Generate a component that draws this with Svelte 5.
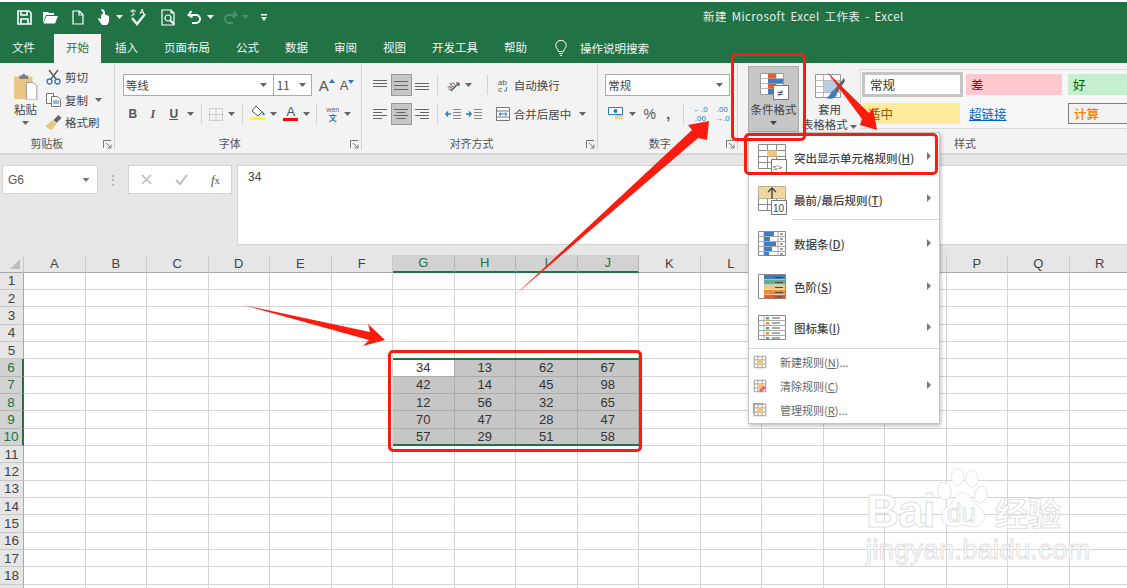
<script>
  const tabs = ['插入', '页面布局', '公式', '数据', '审阅', '视图', '开发工具', '帮助'];
  const columns = 'ABCDEFGHIJKLMNOPQR'.split('');
  const rows = Array.from({ length: 19 }, (_, i) => i + 1);
  const values = {
    6: [34, 13, 62, 67],
    7: [42, 14, 45, 98],
    8: [12, 56, 32, 65],
    9: [70, 47, 28, 47],
    10: [57, 29, 51, 58]
  };
  const selectedCols = ['G', 'H', 'I', 'J'];

  function cellValue(row, col) {
    const idx = selectedCols.indexOf(col);
    if (idx < 0 || !values[row]) return '';
    return values[row][idx];
  }

  function isSelected(row, col) {
    return selectedCols.includes(col) && row >= 6 && row <= 10;
  }
</script>

{#snippet caret(color = '#666')}
  <svg class="caret" width="7" height="4" viewBox="0 0 7 4"><path d="M0 0h7L3.5 4z" fill={color} /></svg>
{/snippet}

{#snippet launcher()}
  <svg class="launcher" width="9" height="9" viewBox="0 0 9 9" fill="none" stroke="#777"><path d="M.5 8V.5H8M3 3l5 5M8 4.5V8H4.5" /></svg>
{/snippet}

{#snippet tableGrid()}
  <path d="M1.5 1.5h27v24h-27zM1.5 7.5h27M1.5 13.5h27M1.5 19.5h27M10.5 1.5v24M19.5 1.5v24" fill="#fff" stroke="#8a8a8a" />
{/snippet}

{#snippet smallTable()}
  <path d="M1.5 1.5h14v14h-14zM1.5 6h14M1.5 11h14M6 1.5v14M11 1.5v14" fill="#fff" stroke="#8a8a8a" />
  <rect x="5" y="5.500" width="7" height="6" fill="#f0c77f" />
{/snippet}

<div class="app">
  <header class="titlebar">
    <div class="qat">
      <span class="q q24">
        <svg width="15" height="15" viewBox="0 0 15 15" fill="none" stroke="#fff" stroke-width="1.6"><path d="M1 1h11l2 2v11H1z" /><path d="M4 1v4h6V1M4 14V9h7v5" /></svg>
      </span>
      <span class="q q28">
        <svg width="16" height="13" viewBox="0 0 16 13" fill="#fff"><path d="M1 3V1h5l1 1h5v2H4L1 12zM4.500 5H16l-3 7.500H1.500z" /></svg>
      </span>
      <span class="q q28">
        <svg width="12" height="15" viewBox="0 0 12 15" fill="none" stroke="#fff" stroke-width="1.2"><path d="M1 1h6.500L11 4.500V14H1zM7 1v4h4" /></svg>
      </span>
      <span class="q q22">
        <svg width="14" height="18" viewBox="0 0 14 18" fill="#fff"><path d="M5 1a4 4 0 0 1 4 4v1.500l4 1.500v6l-2 3H6L2 11l1-1 2 1V5h1.500v0z" /><circle cx="5.500" cy="5" r="1.600" fill="#217346" /></svg>
      </span>
      <span class="q q10">{@render caret('#fff')}</span>
      <span class="q q28">
        <svg width="18" height="18" viewBox="0 0 18 18" fill="none" stroke="#e8f1ec" stroke-width="1.500"><path d="M1 3h6M4 1v5M2 8l4-2M11 6l2-5 2 5M12 4.500h3" stroke-width="1" /><path d="M3 10l5 6 8-10" stroke-width="2.400" /></svg>
      </span>
      <span class="q q32">
        <svg width="15" height="17" viewBox="0 0 15 17" fill="none" stroke="#fff" stroke-width="1.200"><path d="M10 1H1v15h12V4zM10 1v3h3" /><circle cx="7" cy="9" r="3" /><path d="M9 11l4 4" stroke-width="1.800" /></svg>
      </span>
      <span class="q q21">
        <svg width="15" height="14" viewBox="0 0 15 14" fill="none" stroke="#fff" stroke-width="2"><path d="M4.500 1L1.500 5l4 2.500M2 5h7a4 4 0 0 1 0 8H5" /></svg>
      </span>
      <span class="q q10">{@render caret('#fff')}</span>
      <span class="q q24 redo">
        <svg width="15" height="14" viewBox="0 0 15 14" fill="none" stroke="#4c9070" stroke-width="2"><path d="M10.500 1l3 4-4 2.500M13 5H6a4 4 0 0 0 0 8h4" /></svg>
      </span>
      <span class="q q10 dim">{@render caret('#4c9070')}</span>
      <span class="q q28">
        <svg width="6" height="7" viewBox="0 0 6 7" fill="#fff"><path d="M0 0h6v1.500H0zM0 3h6L3 7z" /></svg>
      </span>
    </div>
    <div class="doc-title">新建 Microsoft Excel 工作表 - Excel</div>
  </header>

  <nav class="tabs">
    <span class="tab">文件</span>
    <span class="tab active">开始</span>
    {#each tabs as tab}
      <span class="tab">{tab}</span>
    {/each}
    <span class="search">
      <svg width="12" height="16" viewBox="0 0 12 16" fill="none" stroke="#fff"><path d="M3.500 11.500C3 9 .8 8 .8 5.500a5.200 5.200 0 0 1 10.400 0C11.200 8 9 9 8.500 11.500zM4 13.500h4M5 15.500h2" /></svg>
      操作说明搜索
    </span>
  </nav>

  <section class="ribbon">
    <div class="group clip">
      <div class="body clip-body">
        <div class="paste">
          <svg width="27" height="27" viewBox="0 0 28 31">
            <path d="M1 4h21v26H1z" fill="#e9c684" />
            <path d="M7 3h3a2 2 0 0 1 4 0h3v4H7z" fill="#7f7f7f" />
            <path d="M15 11h8l4 4v16H15z" fill="#fff" stroke="#8c8c8c" />
          </svg>
          <span>粘贴</span>
          {@render caret()}
        </div>
        <ul class="clip-list">
          <li>
            <svg width="15" height="16" viewBox="0 0 15 16" fill="none"><path d="M3 1l7 9M12 1l-7 9" stroke="#555" stroke-width="1.400" /><circle cx="3.500" cy="12.500" r="2.500" stroke="#2b79c2" stroke-width="1.300" /><circle cx="11.500" cy="12.500" r="2.500" stroke="#2b79c2" stroke-width="1.300" /></svg>
            <span>剪切</span>
          </li>
          <li>
            <svg width="15" height="14" viewBox="0 0 15 14" fill="#fff" stroke="#777"><path d="M.5.5h7v10h-7z" /><path d="M5.500 3.500h6l3 3v7h-9z" /><path d="M7 8h6M7 10h6" stroke="#2b79c2" /></svg>
            <span>复制</span>
            {@render caret()}
          </li>
          <li>
            <svg width="16" height="15" viewBox="0 0 16 15"><path d="M0 11l7-6 4 4-5 6c-2-1-4-2-6-4z" fill="#e9c684" /><path d="M8 5l5-5 3 3-5 5z" fill="#666" /></svg>
            <span>格式刷</span>
          </li>
        </ul>
      </div>
      <div class="label clip-label">剪贴板{@render launcher()}</div>
    </div>

    <div class="group font">
      <div class="body font-body">
        <div class="font-row1">
          <div class="combo">
            <span class="combo-name">等线{@render caret()}</span>
            <span class="combo-size">11{@render caret()}</span>
          </div>
          <span class="grow">A<svg width="6" height="4" viewBox="0 0 6 4"><path d="M0 4l3-4 3 4z" fill="#2b79c2" /></svg></span>
          <span class="shrink">A<svg width="6" height="4" viewBox="0 0 6 4"><path d="M0 0l3 4 3-4z" fill="#2b79c2" /></svg></span>
        </div>
        <div class="tool-row">
          <span class="w20 bold">B</span>
          <span class="w20 ital">I</span>
          <span class="w22 under">U</span>
          <span class="w12">{@render caret()}</span>
          <span class="w10"><i class="vsep"></i></span>
          <span class="w19">
            <svg width="14" height="13" viewBox="0 0 14 13" fill="none" stroke="#aaa" stroke-dasharray="1 1"><path d="M.5.500h13v12H.5zM7 .5v12M.5 6.500h13" /></svg>
          </span>
          <span class="w12">{@render caret()}</span>
          <span class="w10"><i class="vsep"></i></span>
          <span class="w20 stack">
            <svg width="16" height="11" viewBox="0 0 16 11"><path d="M6 0l6 6-4 4-6-5z" fill="#fff" stroke="#555" /><path d="M13 5l2 4h-3z" fill="#2b79c2" /></svg>
            <b class="swatch yellow"></b>
          </span>
          <span class="w12">{@render caret()}</span>
          <span class="w22 stack font-a">A<b class="swatch red"></b></span>
          <span class="w10">{@render caret()}</span>
          <span class="w10"><i class="vsep"></i></span>
          <span class="w22 wen"><small>wén</small><em>文</em></span>
          <span class="w8">{@render caret()}</span>
        </div>
      </div>
      <div class="label">字体{@render launcher()}</div>
    </div>

    <div class="group align">
      <div class="body align-body">
        <div class="tool-row">
          <span class="w21">
            <svg width="14" height="10" viewBox="0 0 14 10" stroke="#666"><path d="M0 .5h14M0 3.500h14M0 6.500h14" /></svg>
          </span>
          <span class="w21 pressed">
            <svg width="14" height="9" viewBox="0 0 14 9" stroke="#666"><path d="M0 .5h14M0 4.500h14M0 8.500h14" /></svg>
          </span>
          <span class="w21">
            <svg width="14" height="10" viewBox="0 0 14 10" stroke="#666"><path d="M0 3.500h14M0 6.500h14M0 9.500h14" /></svg>
          </span>
          <span class="w10"><i class="vsep"></i></span>
          <span class="w21">
            <svg width="16" height="15" viewBox="0 0 16 15" fill="none" stroke="#555"><text x="1" y="12" class="abc tilt">ab</text><path d="M6 13l8-8M14 5h-3M14 5v3" stroke-width="1.200" /></svg>
          </span>
          <span class="w9">{@render caret()}</span>
          <span class="w12 wrap-sep"><i class="vsep"></i></span>
          <span class="w18">
            <svg width="12" height="15" viewBox="0 0 12 15"><text x="1" y="7" class="abc">ab</text><text x="1" y="14" class="abc">c</text><path d="M10 9l-1 4H7" fill="none" stroke="#2b79c2" /></svg>
          </span>
          <span class="cmd">自动换行</span>
        </div>
        <div class="tool-row">
          <span class="w21">
            <svg width="14" height="10" viewBox="0 0 14 10" stroke="#666"><path d="M0 .5h14M0 3.500h9M0 6.500h14M0 9.500h9" /></svg>
          </span>
          <span class="w21 pressed">
            <svg width="14" height="10" viewBox="0 0 14 10" stroke="#666"><path d="M0 .5h14M2.500 3.500h9M0 6.500h14M2.500 9.500h9" /></svg>
          </span>
          <span class="w21">
            <svg width="14" height="10" viewBox="0 0 14 10" stroke="#666"><path d="M0 .5h14M5 3.500h9M0 6.500h14M5 9.500h9" /></svg>
          </span>
          <span class="w10"><i class="vsep"></i></span>
          <span class="w21">
            <svg width="16" height="11" viewBox="0 0 16 11" fill="none"><path d="M8 .5h8M8 3.500h8M8 6.500h8M8 9.500h8" stroke="#888" /><path d="M6 5H1M3 2.500L.8 5 3 7.500" stroke="#2b79c2" stroke-width="1.300" /></svg>
          </span>
          <span class="w21">
            <svg width="16" height="11" viewBox="0 0 16 11" fill="none"><path d="M8 .5h8M8 3.500h8M8 6.500h8M8 9.500h8" stroke="#888" /><path d="M0 5h5M3 2.500L5.200 5 3 7.500" stroke="#2b79c2" stroke-width="1.300" /></svg>
          </span>
          <span class="w9"></span>
          <span class="w18">
            <svg width="14" height="14" viewBox="0 0 14 14" fill="#fff" stroke="#777"><path d="M.5.5h13v13H.5zM.5 4h13M.5 10h13" /><path d="M3 7h8M5 5.500L3 7l2 1.500M9 5.500L11 7 9 8.500" fill="none" stroke="#2b79c2" /></svg>
          </span>
          <span class="cmd">合并后居中</span>
          <span class="merge-caret">{@render caret()}</span>
        </div>
      </div>
      <div class="label">对齐方式{@render launcher()}</div>
    </div>

    <div class="group number">
      <div class="body number-body">
        <div class="num-combo">常规{@render caret()}</div>
        <div class="tool-row">
          <span class="w22">
            <svg width="16" height="14" viewBox="0 0 16 14"><path d="M.5.5h14v7H.5z" fill="#fff" stroke="#2b79c2" /><circle cx="7.500" cy="4" r="2" fill="#2b79c2" /><path d="M7 8h8v1.800H7zM7 10.500h8v1.500H7z" fill="#e9c684" /></svg>
          </span>
          <span class="w10">{@render caret()}</span>
          <span class="w22 pct">%</span>
          <span class="w18 comma">,</span>
          <span class="w12"><i class="vsep"></i></span>
          <span class="w22 dec"><b>←.0</b><b>.00</b></span>
          <span class="w22 dec"><b>.00</b><b>→.0</b></span>
        </div>
      </div>
      <div class="label">数字{@render launcher()}</div>
    </div>

    <div class="group styles">
      <div class="body styles-body">
        <div class="big-btn pressed-btn">
          <svg width="30" height="28" viewBox="0 0 30 28">
            <path d="M1.500 1.500h23v21h-23z" fill="#fff" stroke="#999" />
            <path d="M1.500 6.500h23M1.500 11.500h23M1.500 16.500h23M9.500 1.500v21M17 1.500v21" stroke="#bbb" />
            <rect x="9" y="1.500" width="8" height="5" fill="#d9623c" />
            <rect x="9" y="7" width="15" height="4.500" fill="#3f7dc1" />
            <rect x="9" y="12" width="8" height="4.500" fill="#d9623c" />
            <rect x="9" y="17" width="5" height="5" fill="#3f7dc1" />
            <path d="M14.500 13.500h15v14h-15z" fill="#fff" stroke="#777" />
            <text x="18" y="25" class="ne">≠</text>
          </svg>
          <span>条件格式</span>
          {@render caret('#444')}
        </div>
        <div class="big-btn table-btn">
          <svg width="31" height="28" viewBox="0 0 31 28">
            <path d="M1.500 1.500h25v23h-25z" fill="#fff" stroke="#999" />
            <path d="M1.500 7.500h25M1.500 13.500h25M1.500 19.500h25M9.500 1.500v23M17.500 1.500v23" stroke="#bbb" />
            <rect x="10" y="8" width="16" height="11" fill="#b9cde5" />
            <path d="M30 5L20 17l3 3L31 8z" fill="#666" />
            <path d="M20 17c-4 1-3 6-8 8 5 2 11 0 11-5z" fill="#3f7dc1" />
          </svg>
          <span>套用</span>
          <span class="two">表格格式 {@render caret()}</span>
        </div>
        <div class="gallery">
          <div class="cell normal">常规</div>
          <div class="cell bad">差</div>
          <div class="cell good">好</div>
          <div class="cell neutral">适中</div>
          <div class="cell link">超链接</div>
          <div class="cell calc">计算</div>
        </div>
      </div>
      <div class="label styles-label">样式</div>
    </div>
  </section>

  <section class="formula">
    <div class="namebox"><span>G6</span>{@render caret('#777')}</div>
    <div class="dots">⋮</div>
    <div class="fx-box">
      <svg width="11" height="11" viewBox="0 0 11 11" stroke="#bdbdbd" stroke-width="1.600"><path d="M1 1l9 9M10 1l-9 9" /></svg>
      <svg width="13" height="11" viewBox="0 0 13 11" fill="none" stroke="#bdbdbd" stroke-width="2"><path d="M1 6l4 4 7-9" /></svg>
      <span class="fx"><i>f</i><small>x</small></span>
    </div>
    <div class="input">34</div>
  </section>

  <section class="sheet">
    <div class="corner"><i></i></div>
    {#each columns as col}
      <div class="col-head" class:sel={selectedCols.includes(col)}>{col}</div>
    {/each}
    {#each rows as row}
      <div class="row-head" class:sel={row >= 6 && row <= 10}>{row < 19 ? row : ''}</div>
      {#each columns as col}
        <div class="cell-box" class:sel={isSelected(row, col)} class:anchor={row === 6 && col === 'G'}>{cellValue(row, col)}</div>
      {/each}
    {/each}
    <div class="selection"></div>
  </section>

  <div class="watermark" aria-hidden="true">
    <div class="wm-top">
      <span class="wm-bai">Bai</span>
      <span class="wm-paw">
        <svg width="60" height="64" viewBox="0 0 62 72" fill="#fff" stroke="#e2e2e2">
          <ellipse cx="10" cy="26" rx="7.500" ry="10" transform="rotate(-15 10 26)" />
          <ellipse cx="25" cy="10" rx="7" ry="9.500" />
          <ellipse cx="41" cy="12" rx="7" ry="9.500" />
          <ellipse cx="51" cy="30" rx="7" ry="9.500" transform="rotate(15 51 30)" />
          <path d="M30 28c-8 0-10 12-18 17-8 6-5 21 8 21 5 0 7-2 11-2s7 2 12 2c13 0 16-15 7-21-8-5-11-17-20-17z" />
        </svg>
        <b>du</b>
      </span>
      <span class="wm-jy">经验</span>
    </div>
    <div class="wm-url">jingyan.baidu.com</div>
  </div>

  <aside class="menu">
    <div class="mi large">
      <svg width="30" height="30" viewBox="0 0 30 30">
        {@render tableGrid()}
        <rect x="10" y="7.500" width="10" height="6" fill="#f0c77f" />
        <path d="M14.500 16.500h15v13h-15z" fill="#fff" stroke="#777" />
        <text x="16" y="27" class="mini">≤&gt;</text>
      </svg>
      <span class="mt">突出显示单元格规则(<u>H</u>)</span>
      <i class="arrow"></i>
    </div>
    <div class="mi large line">
      <svg width="30" height="30" viewBox="0 0 30 30">
        {@render tableGrid()}
        <rect x="1.500" y="1.500" width="27" height="12" fill="#f0d79f" />
        <path d="M15 14V3M11 7l4-4 4 4" fill="none" stroke="#444" stroke-width="1.400" />
        <path d="M14.500 15.500h15v14h-15z" fill="#fff" stroke="#777" />
        <text x="16" y="27" class="mini ten">10</text>
      </svg>
      <span class="mt">最前/最后规则(<u>T</u>)</span>
      <i class="arrow"></i>
    </div>
    <div class="mi large">
      <svg width="30" height="28" viewBox="0 0 30 28">
        <path d="M1.500 1.500h27v24h-27z" fill="#fff" stroke="#8a8a8a" />
        <path d="M1.500 6.500h27M1.500 11.500h27M1.500 16.500h27M1.500 21.500h27M7 1.500v24M21 1.500v24" stroke="#aaa" />
        <path d="M7 2h10v4H7zM7 7h6v4H7zM7 12h12v4H7zM7 17h8v4H7zM7 22h5v3.500H7z" fill="#3f7dc1" />
        <path d="M23 4h3M23 9h3M23 14h3M23 19h3M23 24h3" stroke="#444" />
      </svg>
      <span class="mt">数据条(<u>D</u>)</span>
      <i class="arrow"></i>
    </div>
    <div class="mi large">
      <svg width="30" height="28" viewBox="0 0 30 28">
        <path d="M1.500 1.500h27v24h-27z" fill="#fff" stroke="#8a8a8a" />
        <rect x="7" y="2" width="21" height="4.500" fill="#3f7dc1" />
        <rect x="7" y="7" width="21" height="4.500" fill="#6fa987" />
        <rect x="7" y="12" width="21" height="4.500" fill="#f0c77f" />
        <rect x="7" y="17" width="21" height="4.500" fill="#ed8a35" />
        <rect x="7" y="22" width="21" height="3.500" fill="#d9623c" />
        <path d="M18 4.500h8M18 9.500h8M18 14.500h8M18 19.500h8M18 24h8" stroke="#444" />
      </svg>
      <span class="mt">色阶(<u>S</u>)</span>
      <i class="arrow"></i>
    </div>
    <div class="mi large">
      <svg width="30" height="28" viewBox="0 0 30 28">
        <path d="M1.500 1.500h27v24h-27z" fill="#fff" stroke="#8a8a8a" />
        <path d="M1.500 6.500h27M1.500 11.500h27M1.500 16.500h27M1.500 21.500h27M7 1.500v24" stroke="#aaa" />
        <rect x="9" y="3" width="3" height="2.500" fill="#5aa37c" />
        <rect x="9" y="8" width="3" height="2.500" fill="#ed8a35" />
        <rect x="9" y="13" width="3" height="2.500" fill="#5aa37c" />
        <rect x="9" y="18" width="3" height="2.500" fill="#ed8a35" />
        <rect x="9" y="23" width="3" height="2" fill="#5aa37c" />
        <path d="M15 4h8M15 9h8M15 14h8M15 19h8M15 24h8" stroke="#555" />
      </svg>
      <span class="mt">图标集(<u>I</u>)</span>
      <i class="arrow"></i>
    </div>
    <div class="mi small rule">
      <svg width="14" height="14" viewBox="0 0 17 17">{@render smallTable()}</svg>
      <span class="st">新建规则(<u>N</u>)...</span>
    </div>
    <div class="mi small">
      <svg width="14" height="14" viewBox="0 0 17 17">{@render smallTable()}<path d="M7 14l6-6 3 3-6 5z" fill="#e8607f" /></svg>
      <span class="st">清除规则(<u>C</u>)</span>
      <i class="arrow"></i>
    </div>
    <div class="mi small">
      <svg width="14" height="14" viewBox="0 0 17 17"><path d="M.5.5h12v3h-12zM.5.5v12h3" fill="none" stroke="#8a8a8a" />{@render smallTable()}</svg>
      <span class="st">管理规则(<u>R</u>)...</span>
    </div>
  </aside>

  <div class="mark mark-cond"></div>
  <div class="mark mark-item"></div>
  <div class="mark mark-data"></div>
  <svg class="arrows" width="1127" height="588" viewBox="0 0 1127 588" fill="#fb1c10">
    <polygon points="515,295 692,130 688,125 709,121 707,140 698,138" />
    <polygon points="243,305 370,332 368,324 385,340 363,346 369,340" />
    <polygon points="827,72 869,113 873,108 877,130 860,125 862,119" />
  </svg>
</div>

<style>
  :global(body) {
    margin: 0;
    background: #fff;
    overflow: hidden;
  }

  .app {
    position: relative;
    width: 1127px;
    height: 588px;
    overflow: hidden;
    padding-top: 2px;
    box-sizing: border-box;
    font-family: "Noto Sans CJK SC", "Liberation Sans", sans-serif;
    font-size: 11.500px;
    color: #444;
  }

  .titlebar {
    display: flex;
    align-items: center;
    height: 32px;
    padding-left: 12px;
    background: #217346;
    color: #e6efea;
  }

  .qat {
    display: flex;
    align-items: center;
    margin-top: -2px;
  }

  .q {
    display: flex;
    align-items: center;
    justify-content: center;
  }

  .q10 { width: 10px; }
  .q21 { width: 21px; }
  .q22 { width: 22px; }
  .q24 { width: 24px; }
  .q28 { width: 28px; }
  .q32 { width: 32px; }
  .redo { margin-left: 3px; }
  .dim { margin-left: -2px; }

  .doc-title {
    margin-left: 425px;
    margin-top: -4px;
    font-size: 11.500px;
    word-spacing: 2px;
    letter-spacing: .4px;
    white-space: nowrap;
  }

  .tabs {
    display: flex;
    align-items: stretch;
    gap: 2px;
    height: 29px;
    background: #217346;
    color: #f2f6f4;
    font-size: 11.500px;
  }

  .tab {
    padding: 0 12px;
    line-height: 27px;
    white-space: nowrap;
  }

  .tab:first-child {
    margin-right: 5px;
  }

  .tab.active {
    background: #f3f3f3;
    color: #217346;
  }

  .search {
    display: flex;
    align-items: center;
    gap: 13px;
    margin-left: 14px;
    margin-top: -2px;
  }

  .ribbon {
    display: flex;
    height: 90px;
    box-sizing: content-box;
    background: #f3f3f3;
    border-bottom: 2px solid #d6d6d6;
  }

  .group {
    position: relative;
    display: flex;
    flex-direction: column;
    box-sizing: border-box;
    border-right: 1px solid #d2d2d2;
    margin-bottom: 3px;
  }

  .body {
    height: 74px;
    box-sizing: border-box;
  }

  .label {
    height: 13px;
    line-height: 13px;
    padding-right: 16px;
    text-align: center;
    font-size: 11px;
    color: #555;
  }

  .clip-label {
    padding-right: 20px;
  }

  .launcher {
    position: absolute;
    right: 2px;
    bottom: 1px;
  }

  .clip { width: 115px; }

  .clip-body {
    display: flex;
    padding: 8px 0 0 12px;
  }

  .paste {
    display: flex;
    flex-direction: column;
    align-items: center;
    width: 27px;
    padding-top: 2px;
  }

  .paste span {
    margin: 1px 0 4px;
    line-height: 16px;
  }

  .clip-list {
    list-style: none;
    margin: -5px 0 0 6px;
    padding: 0;
  }

  .clip-list li {
    display: flex;
    align-items: center;
    height: 22.500px;
    gap: 3px;
    white-space: nowrap;
  }

  .clip-list svg {
    flex: none;
    width: 17px;
  }

  .clip-list li .caret {
    width: 7px;
    margin-left: 4px;
  }

  .font { width: 247px; }

  .font-body {
    padding: 11px 0 0 8px;
  }

  .font-row1 {
    display: flex;
    align-items: center;
    height: 22px;
    margin-bottom: 7px;
  }

  .combo {
    display: flex;
    height: 22px;
    width: 189px;
    box-sizing: border-box;
    background: #fff;
    border: 1px solid #ababab;
  }

  .combo-name {
    display: flex;
    align-items: center;
    justify-content: space-between;
    width: 150px;
    box-sizing: border-box;
    padding: 0 6px 0 2px;
    border-right: 1px solid #ababab;
  }

  .combo-size {
    display: flex;
    align-items: center;
    justify-content: space-between;
    flex: 1;
    padding: 0 5px 0 3px;
  }

  .grow,
  .shrink {
    display: flex;
    align-items: flex-start;
    width: 21px;
    font-family: "Liberation Sans", sans-serif;
    color: #555;
  }

  .grow {
    margin-left: 7px;
    font-size: 15px;
  }

  .shrink {
    font-size: 13px;
  }

  .grow svg,
  .shrink svg {
    margin-top: 2px;
  }

  .tool-row {
    display: flex;
    align-items: center;
    height: 22px;
  }

  .tool-row > span:not(.cmd) {
    display: flex;
    align-items: center;
    justify-content: center;
    height: 22px;
    flex: none;
    box-sizing: border-box;
  }

  .w8 { width: 8px; }
  .w9 { width: 9px; }
  .w10 { width: 10px; }
  .w12 { width: 12px; }
  .w18 { width: 18px; }
  .w19 { width: 19px; }
  .w20 { width: 20px; }
  .w21 { width: 21px; }
  .w22 { width: 22px; }

  .tool-row > .wrap-sep {
    margin-left: 9px;
  }

  .vsep {
    display: block;
    width: 1px;
    height: 20px;
    background: #d2d2d2;
  }

  .bold,
  .ital,
  .under {
    font-family: "Liberation Sans", sans-serif;
    font-size: 12px;
    color: #555;
  }

  .bold { font-weight: 700; }
  .ital { font-style: italic; font-family: "Liberation Serif", serif; font-weight: 700; }
  .under { text-decoration: underline; font-weight: 700; }

  .tool-row > .stack {
    flex-direction: column;
    justify-content: flex-end;
    padding-bottom: 3px;
  }

  .swatch {
    display: block;
    width: 15px;
    height: 3px;
  }

  .yellow { background: #ffff00; }
  .red { background: #ff0000; }

  .font-a {
    font-family: "Liberation Sans", sans-serif;
    font-size: 13px;
    line-height: 13px;
    color: #555;
  }

  .tool-row > .wen {
    flex-direction: column;
    line-height: 8px;
  }

  .wen small {
    font-size: 7px;
    color: #666;
    font-family: "Liberation Sans", sans-serif;
  }

  .wen em {
    font-style: normal;
    font-size: 8px;
    color: #2b79c2;
    font-weight: 700;
  }

  .align { width: 237px; }

  .align-body {
    padding: 11px 0 0 8px;
  }

  .align-body .tool-row + .tool-row {
    margin-top: 7px;
  }

  .tool-row > .pressed {
    background: #c6c6c6;
    border: 1px solid #9a9a9a;
  }

  .abc {
    font-family: "Liberation Sans", sans-serif;
    font-size: 8px;
    fill: #555;
    stroke: none;
  }

  .tilt {
    transform: rotate(-45deg);
    transform-origin: 4px 8px;
  }

  .cmd {
    margin-left: 2px;
    white-space: nowrap;
    color: #444;
  }

  .tool-row > .merge-caret {
    margin-left: 8px;
  }

  .number { width: 140px; }

  .number-body {
    padding: 11px 0 0 7px;
  }

  .num-combo {
    display: flex;
    align-items: center;
    justify-content: space-between;
    width: 125px;
    height: 22px;
    padding: 0 6px 0 2px;
    margin-bottom: 7px;
    box-sizing: border-box;
    background: #fff;
    border: 1px solid #ababab;
    color: #444;
  }

  .pct {
    padding-left: 3px;
    font-family: "Liberation Sans", sans-serif;
    font-size: 14px;
    color: #555;
  }

  .comma {
    font-family: "Liberation Sans", sans-serif;
    font-size: 14px;
    font-weight: 700;
    color: #555;
  }

  .tool-row > .dec {
    flex-direction: column;
    font-family: "Liberation Sans", sans-serif;
    font-size: 8px;
    line-height: 9px;
    color: #2b79c2;
  }

  .dec b {
    font-weight: 400;
  }

  .styles {
    flex: 1;
    border-right: 0;
  }

  .styles-body {
    display: flex;
    padding: 3px 0 0 10px;
  }

  .big-btn {
    display: flex;
    flex-direction: column;
    align-items: center;
    box-sizing: border-box;
    white-space: nowrap;
    line-height: 15px;
  }

  .pressed-btn {
    width: 51px;
    height: 66px;
    padding-top: 5px;
    background: #c6c6c6;
    border: 1px solid #ababab;
  }

  .pressed-btn span {
    margin-top: 2px;
  }

  .pressed-btn .caret {
    margin-top: 4px;
  }

  .table-btn {
    width: 61px;
    padding-top: 7px;
    line-height: 15px;
  }

  .table-btn span {
    display: block;
    margin-top: 1px;
  }

  .table-btn .two {
    margin-top: 0;
  }

  .gallery {
    display: grid;
    grid-template-columns: 103px 102px 102px;
    grid-template-rows: 29px 29px;
    width: 267px;
    height: 60px;
    margin-top: 3px;
    overflow: hidden;
    box-sizing: border-box;
    background: #f7f7f7;
    border: 1px solid #dadada;
    border-right: 0;
    font-size: 12.500px;
    flex: none;
  }

  .cell {
    display: flex;
    align-items: center;
    margin: 4px 4px 4px 2px;
    padding-left: 5px;
    box-sizing: border-box;
  }

  .normal {
    margin: 2px 1px 2px 1px;
    background: #fff;
    border: 3px solid #c4c4c4;
    color: #333;
  }

  .bad { background: #ffc7ce; color: #9c0006; }
  .good { background: #c6efce; color: #006100; }
  .neutral { background: #ffeb9c; color: #9c5700; }

  .link {
    padding-left: 3px;
    color: #0563c1;
    text-decoration: underline;
  }

  .calc {
    background: #f2f2f2;
    border: 1px solid #7f7f7f;
    color: #fa7d00;
    font-weight: 500;
  }

  .styles-label {
    padding-left: 216px;
    text-align: left;
  }

  .ne {
    font-family: "Liberation Sans", sans-serif;
    font-size: 11px;
    fill: #444;
  }

  .formula {
    display: flex;
    align-items: flex-start;
    height: 100px;
    padding: 10px 0 0 2px;
    box-sizing: border-box;
    background: #e6e6e6;
  }

  .namebox {
    display: flex;
    align-items: center;
    justify-content: space-between;
    width: 96px;
    height: 29px;
    padding: 0 7px 0 5px;
    box-sizing: border-box;
    background: #fff;
    border: 1px solid #d4d4d4;
    font-family: "Liberation Sans", sans-serif;
    font-size: 12px;
    color: #555;
  }

  .namebox .caret {
    width: 8px;
  }

  .dots {
    width: 30px;
    line-height: 29px;
    text-align: center;
    color: #aaa;
    font-size: 14px;
  }

  .fx-box {
    display: flex;
    align-items: center;
    justify-content: space-between;
    width: 104px;
    height: 29px;
    padding: 0 11px 0 12px;
    box-sizing: border-box;
    background: #fff;
    border: 1px solid #d4d4d4;
  }

  .fx {
    font-family: "Liberation Serif", serif;
    font-size: 13px;
    color: #555;
  }

  .input {
    flex: 1;
    height: 80px;
    margin-left: 5px;
    padding: 4px 10px;
    box-sizing: border-box;
    background: #fff;
    border: 1px solid #d4d4d4;
    border-right: 0;
    font-family: "Liberation Sans", sans-serif;
    font-size: 12px;
    color: #444;
  }

  .sheet {
    position: relative;
    display: grid;
    grid-template-columns: 24px repeat(18, 61.500px);
    grid-template-rows: 17.800px repeat(19, 17.330px);
    font-family: "Liberation Sans", sans-serif;
    font-size: 13px;
    color: #444;
  }

  .corner {
    position: relative;
    background: #e6e6e6;
    border-bottom: 1px solid #a8a8a8;
    border-right: 1px solid #c8c8c8;
    box-sizing: border-box;
  }

  .corner i {
    position: absolute;
    right: 3px;
    bottom: 3px;
    width: 0;
    height: 0;
    border-left: 10px solid transparent;
    border-bottom: 10px solid #bdbdbd;
  }

  .col-head {
    display: flex;
    align-items: center;
    justify-content: center;
    background: #e6e6e6;
    border-right: 1px solid #c8c8c8;
    border-bottom: 1px solid #a8a8a8;
    box-sizing: border-box;
  }

  .col-head.sel {
    background: #d2d2d2;
    border-right-color: #b4b4b4;
    border-bottom: 2px solid #217346;
    color: #217346;
  }

  .row-head {
    display: flex;
    align-items: center;
    justify-content: center;
    background: #e6e6e6;
    border-right: 1px solid #a8a8a8;
    border-bottom: 1px solid #c8c8c8;
    box-sizing: border-box;
    font-size: 13.500px;
  }

  .row-head.sel {
    background: #d2d2d2;
    border-right: 2px solid #217346;
    border-bottom-color: #b4b4b4;
    color: #217346;
  }

  .cell-box {
    display: flex;
    align-items: center;
    justify-content: center;
    box-sizing: border-box;
    border-right: 1px solid #d4d4d4;
    border-bottom: 1px solid #d4d4d4;
    line-height: 1;
    font-size: 13px;
    color: #333;
  }

  .cell-box.sel {
    background: #c6c6c6;
    border-right-color: #ababab;
    border-bottom-color: #ababab;
  }

  .cell-box.anchor {
    background: #fff;
  }

  .selection {
    position: absolute;
    left: 393px;
    top: 103px;
    width: 246px;
    height: 88px;
    box-sizing: border-box;
    border-top: 2px solid #217346;
    border-bottom: 2px solid #217346;
  }

  .watermark {
    position: absolute;
    left: 866px;
    top: 468px;
    width: 205px;
    color: #fff;
    font-family: "Liberation Sans", sans-serif;
    -webkit-text-stroke: 1px #e0e0e0;
  }

  .wm-top {
    display: flex;
    align-items: flex-end;
    height: 64px;
  }

  .wm-bai {
    width: 67px;
    font-size: 46px;
    font-weight: 700;
    line-height: 42px;
    letter-spacing: -1px;
  }

  .wm-paw {
    position: relative;
    width: 60px;
    height: 64px;
    flex: none;
  }

  .wm-paw svg {
    position: absolute;
    left: 0;
    bottom: 0;
    stroke-width: 1px;
  }

  .wm-paw b {
    position: absolute;
    left: 14px;
    bottom: 3px;
    font-size: 26px;
    font-weight: 400;
    color: #fff;
  }

  .wm-jy {
    margin-left: 2px;
    font-family: "Noto Sans CJK SC", sans-serif;
    font-size: 33px;
    font-weight: 700;
    line-height: 40px;
    letter-spacing: 0;
    white-space: nowrap;
  }

  .wm-url {
    margin-top: 2px;
    font-size: 27px;
    line-height: 32px;
    letter-spacing: .4px;
    white-space: nowrap;
  }

  .menu {
    position: absolute;
    left: 748px;
    top: 132px;
    width: 192px;
    height: 292px;
    padding-top: 3px;
    box-sizing: border-box;
    background: #fff;
    border: 1px solid #c6c6c6;
    box-shadow: 1px 2px 4px rgba(0, 0, 0, .25);
  }

  .mi {
    position: relative;
    display: flex;
    align-items: center;
    box-sizing: border-box;
  }

  .mi.large {
    height: 43px;
    padding-left: 8px;
    gap: 7px;
    font-weight: 500;
  }

  .mi.large:nth-child(1) {
    height: 42px;
    padding-top: 2px;
  }

  .mi.large:nth-child(2) {
    height: 42px;
    padding-top: 1px;
  }

  .mi.large:nth-child(3) {
    height: 42px;
    margin-top: 3px;
  }

  .mi.large:nth-child(5) {
    height: 40px;
  }

  .mi.line::after {
    content: "";
    position: absolute;
    left: 43px;
    right: 0;
    bottom: 0;
    border-bottom: 1px solid #dcdcdc;
  }

  .mi.small {
    height: 24px;
    padding-left: 4px;
    gap: 13px;
    color: #666;
    font-size: 11px;
  }

  .mi.rule {
    border-top: 1px solid #dcdcdc;
    height: 26px;
  }

  .mt {
    color: #444;
    font-size: 11.500px;
  }

  .arrow {
    position: absolute;
    right: 8px;
    top: 50%;
    margin-top: -5px;
    border-left: 4px solid #777;
    border-top: 4px solid transparent;
    border-bottom: 4px solid transparent;
  }

  .mini {
    font-family: "Liberation Sans", sans-serif;
    font-size: 8px;
    fill: #444;
  }

  .ten {
    font-size: 10px;
  }

  .mark {
    position: absolute;
    box-sizing: border-box;
    border: 3.500px solid #fb1c10;
    border-radius: 5px;
  }

  .mark-cond {
    left: 731px;
    top: 53px;
    width: 75px;
    height: 88px;
  }

  .mark-item {
    left: 744px;
    top: 133px;
    width: 194px;
    height: 42px;
  }

  .mark-data {
    left: 388px;
    top: 350px;
    width: 254px;
    height: 102px;
  }

  .arrows {
    position: absolute;
    left: 0;
    top: 0;
  }
</style>
